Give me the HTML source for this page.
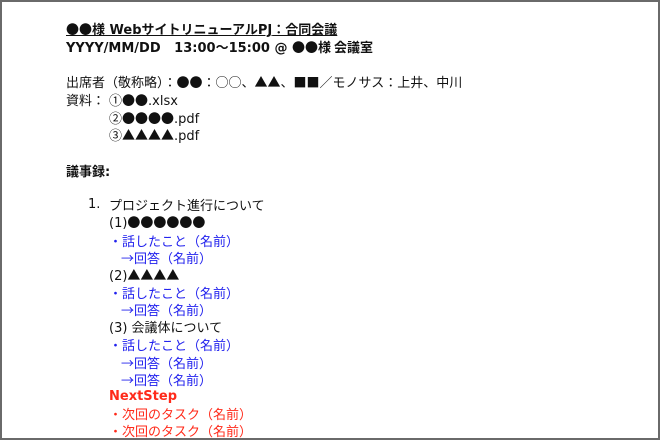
<!DOCTYPE html>
<html><head><meta charset="utf-8"><style>
html,body{margin:0;padding:0;background:#fff}
#f{position:relative;width:656px;height:436px;border:2px solid #6a6a6a;overflow:hidden;font-family:"DejaVu Sans","Noto Sans CJK JP",sans-serif;font-size:13px;color:#111}
.l{position:absolute;white-space:nowrap;line-height:17px}
.b{font-weight:bold}
.bl{color:#2222ee}
.r{color:#ff2a1a}
.j{font-family:"Noto Sans CJK JP",sans-serif}
</style></head><body><div id="f">
<div class="l b" style="left:64px;top:18px;text-decoration:underline"><span class="j">●●様</span> Web<span class="j">サイトリニューアル</span>PJ<span class="j">：合同会議</span></div>
<div class="l b" style="left:64px;top:36px">YYYY/MM/DD&nbsp;&nbsp; 13:00<span class="j">〜</span>15:00 @ <span class="j">●●様 会議室</span></div>
<div class="l j" style="left:64px;top:71px">出席者（敬称略）：●●：○○、▲▲、■■／モノサス：上井、中川</div>
<div class="l j" style="left:64px;top:89px">資料：</div>
<div class="l" style="left:107px;top:89px"><span class="j">①●●</span>.xlsx</div>
<div class="l" style="left:107px;top:107px"><span class="j">②●●●●</span>.pdf</div>
<div class="l" style="left:107px;top:124px"><span class="j">③▲▲▲▲</span>.pdf</div>
<div class="l b" style="left:64px;top:160px"><span class="j">議事録</span>:</div>
<div class="l" style="left:86px;top:194px">1.</div>
<div class="l j" style="left:107px;top:194px">プロジェクト進行について</div>
<div class="l" style="left:107px;top:211px">(1)<span class="j">●●●●●●</span></div>
<div class="l bl j" style="left:107px;top:230px">・話したこと（名前）</div>
<div class="l bl j" style="left:119px;top:247px">→回答（名前）</div>
<div class="l" style="left:107px;top:264px">(2)<span class="j">▲▲▲▲</span></div>
<div class="l bl j" style="left:107px;top:282px">・話したこと（名前）</div>
<div class="l bl j" style="left:119px;top:299px">→回答（名前）</div>
<div class="l" style="left:107px;top:316px">(3) <span class="j">会議体について</span></div>
<div class="l bl j" style="left:107px;top:334px">・話したこと（名前）</div>
<div class="l bl j" style="left:119px;top:352px">→回答（名前）</div>
<div class="l bl j" style="left:119px;top:369px">→回答（名前）</div>
<div class="l b r" style="left:107px;top:386px">NextStep</div>
<div class="l r j" style="left:107px;top:403px">・次回のタスク（名前）</div>
<div class="l r j" style="left:107px;top:420px">・次回のタスク（名前）</div>
</div></body></html>
